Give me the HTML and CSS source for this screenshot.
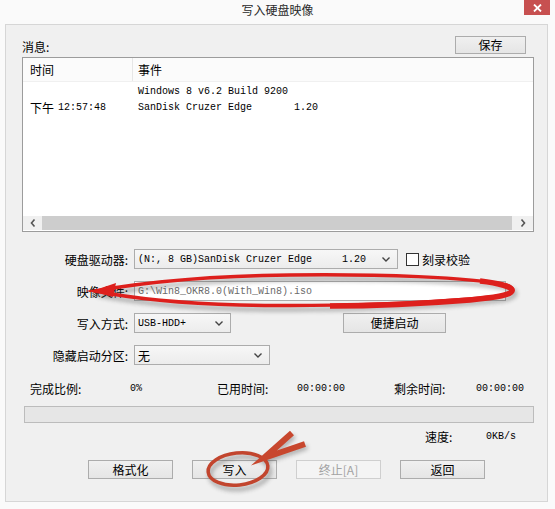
FILE: index.html
```
<!DOCTYPE html>
<html lang="zh-CN">
<head>
  <meta charset="UTF-8">
  <title>写入硬盘映像</title>
  <link rel="stylesheet" href="styles.css">
</head>
<body>
  <div class="window">
    <div class="titlebar">
      <span class="title">写入硬盘映像</span>
      <div class="close">
        <svg width="9" height="8" viewBox="0 0 9 8"><path d="M1 0.5 L8 7.5 M8 0.5 L1 7.5" stroke="#fff" stroke-width="1.8"/></svg>
      </div>
    </div>

    <div class="panel">
      <div class="msgHead">
        <span class="msgLabel">消息:</span>
        <button class="btn save">保存</button>
      </div>

      <div class="list">
        <div class="listHead">
          <div class="colTime">时间</div>
          <div class="colEvent">事件</div>
        </div>
        <div class="listBody">
          <div class="row">
            <div class="colTime"></div>
            <div class="colEvent mono">Windows 8 v6.2 Build 9200</div>
          </div>
          <div class="row">
            <div class="colTime"><span>下午</span><span class="mono time">12:57:48</span></div>
            <div class="colEvent mono">SanDisk Cruzer Edge       1.20</div>
          </div>
        </div>
        <div class="hscroll">
          <div class="arrow">
            <svg width="6" height="8" viewBox="0 0 6 8"><path d="M4.5 0.5 L1.5 4 L4.5 7.5" stroke="#555" stroke-width="1.6" fill="none"/></svg>
          </div>
          <div class="thumb"></div>
          <div class="arrow right">
            <svg width="6" height="8" viewBox="0 0 6 8"><path d="M1.5 0.5 L4.5 4 L1.5 7.5" stroke="#555" stroke-width="1.6" fill="none"/></svg>
          </div>
        </div>
      </div>

      <div class="form">
        <div class="field">
          <label class="fieldLabel">硬盘驱动器:</label>
          <div class="combo drive">
            <span class="mono">(N:, 8 GB)SanDisk Cruzer Edge     1.20</span>
            <svg class="chev" width="8" height="5" viewBox="0 0 8 5"><path d="M0.5 0.5 L4 4 L7.5 0.5" stroke="#444" stroke-width="1.4" fill="none"/></svg>
          </div>
          <span class="check"></span>
          <span class="checkLabel">刻录校验</span>
        </div>
        <div class="field">
          <label class="fieldLabel">映像文件:</label>
          <div class="textbox"><span class="mono">G:\Win8_OKR8.0(With_Win8).iso</span></div>
        </div>
        <div class="field">
          <label class="fieldLabel">写入方式:</label>
          <div class="combo mode">
            <span class="mono">USB-HDD+</span>
            <svg class="chev" width="8" height="5" viewBox="0 0 8 5"><path d="M0.5 0.5 L4 4 L7.5 0.5" stroke="#444" stroke-width="1.4" fill="none"/></svg>
          </div>
          <button class="btn quick">便捷启动</button>
        </div>
        <div class="field">
          <label class="fieldLabel">隐藏启动分区:</label>
          <div class="combo hidden">
            <span>无</span>
            <svg class="chev" width="8" height="5" viewBox="0 0 8 5"><path d="M0.5 0.5 L4 4 L7.5 0.5" stroke="#444" stroke-width="1.4" fill="none"/></svg>
          </div>
        </div>
      </div>

      <div class="status">
        <span class="s1">完成比例:</span>
        <span class="s2 mono">0%</span>
        <span class="s3">已用时间:</span>
        <span class="s4 mono">00:00:00</span>
        <span class="s5">剩余时间:</span>
        <span class="mono">00:00:00</span>
      </div>

      <div class="progress"></div>

      <div class="speed">
        <span class="speedLabel">速度:</span>
        <span class="mono">0KB/s</span>
      </div>

      <div class="actions">
        <button class="btn act">格式化</button>
        <button class="btn act">写入</button>
        <button class="btn act" disabled>终止[A]</button>
        <button class="btn act">返回</button>
      </div>
    </div>

    <svg class="marks" width="555" height="509" viewBox="0 0 555 509">
      <defs>
        <filter id="soft" x="-10%" y="-50%" width="120%" height="200%">
          <feGaussianBlur stdDeviation="2"/>
        </filter>
      </defs>
      <!-- shadows -->
      <g filter="url(#soft)" opacity="0.45" fill="none" stroke="#555">
        <path transform="translate(3 4)" stroke-width="4" d="M95 291 C140 283 200 276 290 275 C380 274 470 277 506 285 C516 288 514 293 500 296 C440 303 330 307 240 305 C170 303 125 297 95 291 Z"/>
        <ellipse transform="translate(2 4) rotate(-6 238 469)" cx="238" cy="469" rx="30" ry="16" stroke-width="4"/>
        <path transform="translate(2 3)" stroke-width="5" d="M292 433 L264 458 L305 444"/>
      </g>
      <!-- red ellipse around image file -->
      <g fill="none" stroke="#dd1f1c" stroke-linejoin="miter" stroke-miterlimit="20">
        <path stroke-width="3.5" d="M95 291 C140 283 200 276 290 275 C380 274 470 277 506 285 C516 288 514 293 500 296 C440 303 330 307 240 305 C170 303 125 297 95 291 Z"/>
        <path stroke-width="5.5" d="M480 281 C498 283 514 287 512 291 C510 295 500 297 470 300 C420 304 380 306 330 306"/>
      </g>
      <path d="M92 291 L116 283 L113 297 Z" fill="#dd1f1c"/>
      <!-- circle and arrow around write -->
      <ellipse transform="rotate(-6 238 469)" cx="238" cy="469" rx="30" ry="16" fill="none" stroke="#c2452e" stroke-width="3.5"/>
      <path d="M292 433 L264 458 L305 444" fill="none" stroke="#c8472e" stroke-width="6" stroke-linejoin="miter" stroke-miterlimit="20"/>
    </svg>
  </div>
</body>
</html>
```

FILE: styles.css
```
html, body {
  margin: 0;
  padding: 0;
  background: #fafafa;
}
body {
  font-family: "Noto Sans CJK SC", "Liberation Sans", sans-serif;
  font-size: 12px;
  color: #000;
}
.mono {
  font-family: "Liberation Mono", "Noto Sans CJK SC", monospace;
  font-size: 10px;
  white-space: pre;
}
div.window {
  width: 555px;
  height: 509px;
  position: relative;
  background: #fafafa;
  overflow: hidden;
}
div.titlebar {
  height: 24px;
  display: grid;
  grid-template-columns: 1fr auto 1fr;
}
span.title {
  grid-column: 2;
  padding-top: 3px;
  line-height: 14px;
  color: #2b2b2b;
}
div.close {
  grid-column: 3;
  justify-self: end;
  margin-right: 5px;
  width: 26px;
  height: 15px;
  background: #c75050;
  display: flex;
  align-items: center;
  justify-content: center;
}
div.panel {
  margin-left: 5px;
  width: 543px;
  height: 478px;
  box-sizing: border-box;
  border: 1px solid #d6d6d6;
  background: #f0f0f0;
}
button.btn {
  font-family: "Noto Sans CJK SC", sans-serif;
  font-size: 12px;
  color: #000;
  padding: 0;
  border: 1px solid #acacac;
  background: linear-gradient(#f0f0f0, #e5e5e5);
  box-sizing: border-box;
  line-height: 16px;
}
button.btn:disabled {
  color: #a3a3a3;
  border-color: #cfcfcf;
  background: #f4f4f4;
}
div.msgHead {
  display: flex;
  justify-content: space-between;
  align-items: flex-end;
  padding: 11px 21px 0 16px;
}
span.msgLabel {
  line-height: 14px;
}
button.save {
  width: 71px;
  height: 18px;
}
div.list {
  margin: 3px 13px 0 16px;
  height: 175px;
  box-sizing: border-box;
  border: 1px solid #9c9c9c;
  background: #fff;
  display: flex;
  flex-direction: column;
}
div.listHead {
  height: 24px;
  display: flex;
  background: #fbfbfb;
  border-bottom: 1px solid #f0f0f0;
  box-sizing: border-box;
}
div.listHead div {
  line-height: 24px;
}
div.colTime {
  width: 110px;
  padding-left: 7px;
  box-sizing: border-box;
  display: flex;
  align-items: center;
}
span.time {
  margin-left: 4px;
}
div.listHead div.colTime {
  border-right: 1px solid #e6e6e6;
}
div.colEvent {
  padding-left: 5px;
}
div.listBody {
  flex: 1;
  padding-top: 1px;
}
div.row {
  display: flex;
  height: 16px;
  align-items: center;
}
div.hscroll {
  height: 14px;
  display: flex;
  background: #f0f0f0;
  margin-bottom: 1px;
}
div.hscroll div.arrow {
  width: 19px;
  display: flex;
  align-items: center;
  justify-content: center;
}
div.hscroll div.arrow.right {
  width: 21px;
}
div.hscroll div.thumb {
  flex: 1;
  background: #cdcdcd;
}
div.form {
  margin-top: 17px;
  display: flex;
  flex-direction: column;
  gap: 12px;
}
div.field {
  display: flex;
  align-items: center;
  height: 20px;
}
label.fieldLabel {
  width: 122px;
  text-align: right;
  margin-right: 6px;
}
div.combo {
  height: 20px;
  box-sizing: border-box;
  border: 1px solid #acacac;
  background: linear-gradient(#f7f7f7, #ececec);
  display: flex;
  align-items: center;
  justify-content: space-between;
  padding: 0 7px 0 3px;
}
div.combo.drive {
  width: 264px;
}
div.combo.mode {
  width: 97px;
}
div.combo.hidden {
  width: 136px;
}
span.check {
  width: 13px;
  height: 13px;
  box-sizing: border-box;
  border: 1px solid #333;
  background: #fff;
  margin-left: 8px;
}
span.checkLabel {
  margin-left: 3px;
}
div.textbox {
  width: 372px;
  height: 20px;
  box-sizing: border-box;
  border: 1px solid #acacac;
  background: #fff;
  display: flex;
  align-items: center;
  padding-left: 3px;
  color: #6b6b6b;
}
button.quick {
  margin-left: 112px;
  width: 103px;
  height: 20px;
}
div.status {
  margin-top: 17px;
  padding-left: 24px;
  display: flex;
  align-items: center;
  line-height: 14px;
}
span.s1 { width: 100px; }
span.s2 { width: 87px; }
span.s3 { width: 80px; }
span.s4 { width: 97px; }
span.s5 { width: 82px; }
div.progress {
  margin: 10px 13px 0 18px;
  height: 17px;
  box-sizing: border-box;
  border: 1px solid #bcbcbc;
  background: #e6e6e6;
}
div.speed {
  margin-top: 7px;
  padding-left: 419px;
  display: flex;
  align-items: center;
  line-height: 14px;
}
span.speedLabel {
  width: 61px;
}
div.actions {
  margin-top: 16px;
  padding-left: 82px;
  display: flex;
  gap: 19px;
}
button.act {
  width: 85px;
  height: 19px;
}
svg.marks {
  position: absolute;
  left: 0;
  top: 0;
  pointer-events: none;
}
```
